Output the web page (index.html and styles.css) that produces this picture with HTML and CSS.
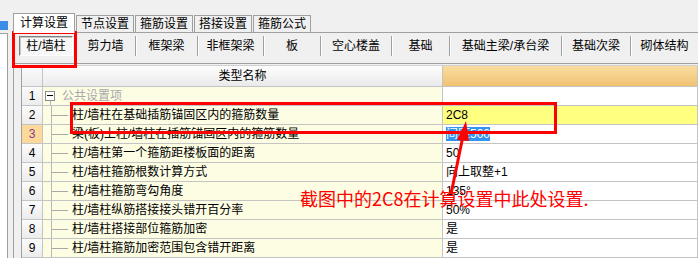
FILE: index.html
```html
<!DOCTYPE html>
<html lang="zh-CN">
<head>
<meta charset="utf-8">
<title>计算设置</title>
<link rel="stylesheet" href="styles.css">
</head>
<body>
<div class="app">
  <div class="side">
    <div class="side-sel"></div>
    <div class="side-panel"></div>
  </div>
  <div class="main">
    <div class="tabs">
      <div class="tab active">计算设置</div>
      <div class="tab">节点设置</div>
      <div class="tab">箍筋设置</div>
      <div class="tab">搭接设置</div>
      <div class="tab">箍筋公式</div>
    </div>
    <div class="panel">
      <div class="toolbar">
        <div class="tb first"><div class="pressed">柱/墙柱</div></div>
        <div class="tb">剪力墙</div>
        <div class="tb">框架梁</div>
        <div class="tb">非框架梁</div>
        <div class="tb">板</div>
        <div class="tb">空心楼盖</div>
        <div class="tb">基础</div>
        <div class="tb">基础主梁/承台梁</div>
        <div class="tb">基础次梁</div>
        <div class="tb">砌体结构</div>
      </div>
      <div class="grid">
        <div class="row hdr">
          <div class="num"></div>
          <div class="name-h">类型名称</div>
          <div class="val-h"></div>
        </div>
        <div class="row">
          <div class="num">1</div>
          <div class="name"><span class="expander"></span><span class="group-text">公共设置项</span></div>
          <div class="val"></div>
        </div>
        <div class="row">
          <div class="num">2</div>
          <div class="name"><span class="branch"></span><span class="txt">柱/墙柱在基础插筋锚固区内的箍筋数量</span></div>
          <div class="val hl">2C8</div>
        </div>
        <div class="row">
          <div class="num cur">3</div>
          <div class="name"><span class="branch"></span><span class="txt">梁(板)上柱/墙柱在插筋锚固区内的箍筋数量</span></div>
          <div class="val"><span class="sel">间距500</span></div>
        </div>
        <div class="row">
          <div class="num">4</div>
          <div class="name"><span class="branch"></span><span class="txt">柱/墙柱第一个箍筋距楼板面的距离</span></div>
          <div class="val">50</div>
        </div>
        <div class="row">
          <div class="num">5</div>
          <div class="name"><span class="branch"></span><span class="txt">柱/墙柱箍筋根数计算方式</span></div>
          <div class="val">向上取整+1</div>
        </div>
        <div class="row">
          <div class="num">6</div>
          <div class="name"><span class="branch"></span><span class="txt">柱/墙柱箍筋弯勾角度</span></div>
          <div class="val">135°</div>
        </div>
        <div class="row">
          <div class="num">7</div>
          <div class="name"><span class="branch"></span><span class="txt">柱/墙柱纵筋搭接接头错开百分率</span></div>
          <div class="val">50%</div>
        </div>
        <div class="row">
          <div class="num">8</div>
          <div class="name"><span class="branch"></span><span class="txt">柱/墙柱搭接部位箍筋加密</span></div>
          <div class="val">是</div>
        </div>
        <div class="row">
          <div class="num">9</div>
          <div class="name"><span class="branch"></span><span class="txt">柱/墙柱箍筋加密范围包含错开距离</span></div>
          <div class="val">是</div>
        </div>
      </div>
    </div>
  </div>
</div>

<div class="mark mark-btn"></div>
<div class="mark mark-row"></div>
<svg class="arrow" width="698" height="258" viewBox="0 0 698 258">
  <line x1="463" y1="136" x2="451" y2="194" stroke="#ff0000" stroke-width="3"/>
  <polygon points="466,121 457,140 469,141" fill="#ff0000"/>
</svg>
<div class="note">截图中的2C8在计算设置中此处设置.</div>
</body>
</html>
```
FILE: styles.css
```css
* { box-sizing: border-box; }

body {
  margin: 0;
  width: 698px;
  height: 258px;
  overflow: hidden;
  position: relative;
  background: #f0f0f0;
  color: #000;
  font: 12px/1 "Liberation Sans", "Noto Sans CJK SC", sans-serif;
}

.app {
  display: flex;
  height: 258px;
}

.side {
  width: 8px;
  margin-right: 5px;
  display: flex;
  flex-direction: column;
}
.side-sel {
  margin-top: 21px;
  height: 9px;
  background: #3a8ee8;
}
.side-panel {
  margin-top: 3px;
  flex: 1;
  background: #fff;
  border-top: 1px solid #a0a0a0;
  border-right: 1px solid #a0a0a0;
}

.main {
  flex: 1;
  min-width: 0;
  display: flex;
  flex-direction: column;
}

.tabs {
  height: 33px;
  display: flex;
  align-items: flex-end;
}
.tab {
  width: 58px;
  height: 17px;
  margin-left: 1px;
  border: 1px solid #a0a0a0;
  border-bottom: none;
  background: #f0f0f0;
  display: flex;
  align-items: center;
  justify-content: center;
}
.tab.active {
  width: 62px;
  height: 20px;
  margin-left: 0;
  margin-bottom: -1px;
  padding-bottom: 1px;
  background: #fff;
  position: relative;
  z-index: 1;
}

.panel {
  flex: 1;
  border-top: 1px solid #a0a0a0;
  border-left: 1px solid #a0a0a0;
}

.toolbar {
  height: 31px;
  padding: 3px 0 0 5px;
  border-bottom: 1px solid #a0a0a0;
  display: grid;
  grid-template-columns: 56px 60px 62px 66px 57px 71px 58px 112px 69px 1fr;
  align-items: start;
}
.tb {
  height: 20px;
  display: flex;
  align-items: center;
  justify-content: center;
  border-left: 1px solid #a0a0a0;
  box-shadow: inset 1px 0 #ffffff;
  white-space: nowrap;
}
.tb.first {
  border-left: none;
  box-shadow: none;
  justify-content: flex-start;
}
.pressed {
  width: 54px;
  height: 20px;
  display: flex;
  align-items: center;
  justify-content: center;
  border: 1px solid;
  border-color: #808080 #ffffff #ffffff #808080;
  background: #f7f7f7;
  box-shadow: inset 1px 1px #c8c8c8;
}

.grid {
  margin: 1px 0 0 7px;
  border-left: 1px solid #a0a0a0;
  border-top: 1px solid #d0d0d0;
}
.row {
  display: grid;
  grid-template-columns: 21px 400px 1fr;
  height: 19px;
}
.row.hdr { height: 21px; }

.row > div {
  border-right: 1px solid #c4c4c4;
  border-bottom: 1px solid #c4c4c4;
  display: flex;
  align-items: center;
  white-space: nowrap;
  overflow: hidden;
}

.num {
  justify-content: center;
  background: linear-gradient(#fbfbfb, #ececec);
  font-size: 12px;
}
.num.cur {
  background: #fcd89b;
  color: #8b3a8b;
}
.name-h {
  justify-content: center;
  background: linear-gradient(#fdfdfd, #eaeaea);
}
.val-h {
  background: linear-gradient(#f9dd9f, #f0c272);
}

.name {
  background: #fdfde4;
  align-items: stretch !important;
}
.expander {
  position: relative;
  align-self: flex-start;
  margin: 4px 0 0 2px;
  width: 10px;
  height: 10px;
  border: 1px solid #8c8c8c;
  background: #fff;
}
.expander::before {
  content: "";
  position: absolute;
  left: 1px;
  right: 1px;
  top: 3px;
  height: 1px;
  background: #000;
}
.expander::after {
  content: "";
  position: absolute;
  left: 4px;
  top: 9px;
  width: 1px;
  height: 6px;
  background: #b4b4b4;
}
.group-text {
  align-self: center;
  margin-left: 7px;
  color: #a8a8a8;
}
.branch {
  margin-left: 8px;
  width: 17px;
  border-left: 1px solid #b8b8b8;
  background: linear-gradient(#a8a8a8, #a8a8a8) no-repeat 0 50% / 100% 1px;
}
.txt {
  align-self: center;
  margin-left: 4px;
}

.val {
  padding-left: 3px;
  background: #fff;
}
.val.hl { background: #ffff80; }
.sel {
  background: #3393f0;
  color: #fff;
  padding: 1px 0;
}

.mark {
  position: absolute;
  border: 3px solid #ff0000;
}
.mark-btn {
  left: 12px;
  top: 31px;
  width: 65px;
  height: 37px;
}
.mark-row {
  left: 70px;
  top: 102px;
  width: 487px;
  height: 32px;
}
.arrow {
  position: absolute;
  left: 0;
  top: 0;
}
.note {
  position: absolute;
  left: 300px;
  top: 188px;
  color: #ff0000;
  font: 18px/21px "Noto Sans CJK SC", "Liberation Sans", sans-serif;
  white-space: nowrap;
}
```
